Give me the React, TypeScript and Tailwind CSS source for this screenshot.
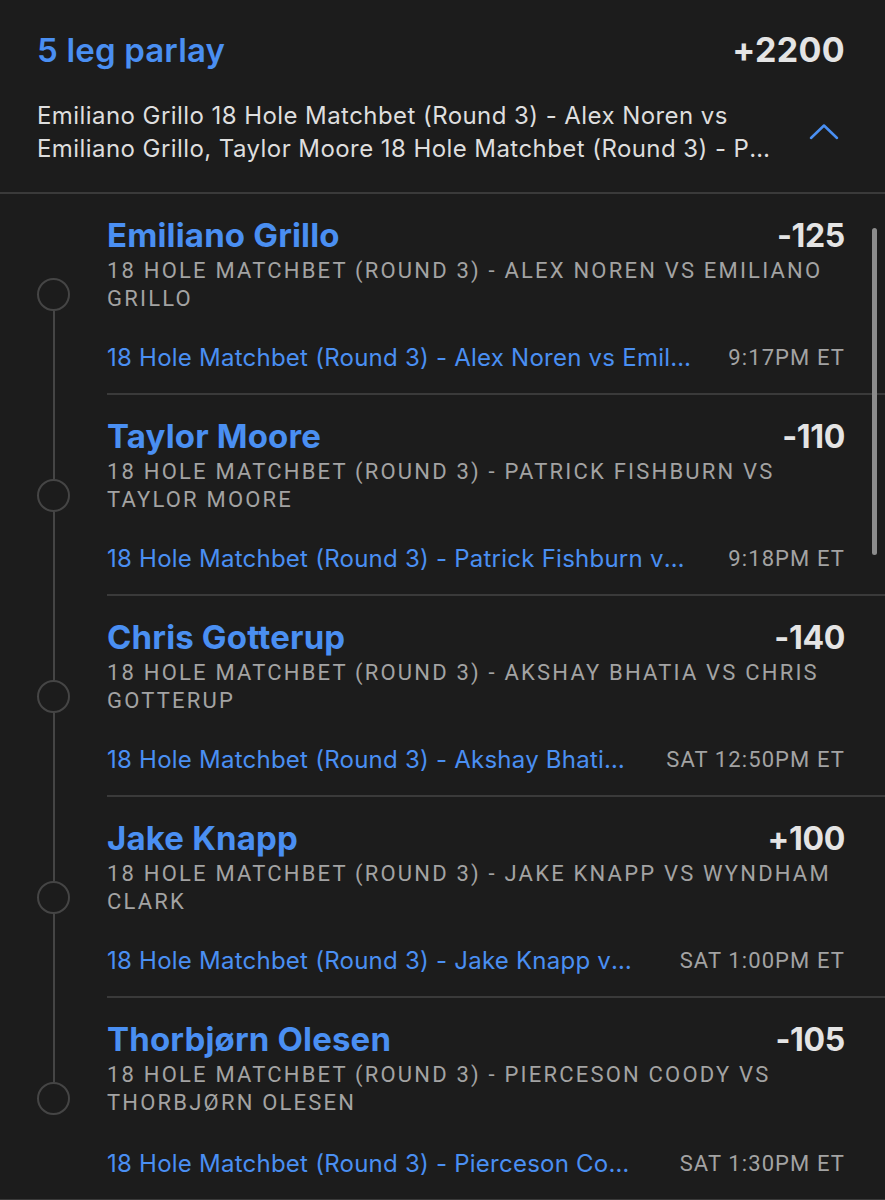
interface Leg {
  name: string;
  odds: string;
  market: string;
  event: string;
  time: string;
}

const legs: Leg[] = [
  {
    name: "Emiliano Grillo",
    odds: "-125",
    market: "18 Hole Matchbet (Round 3) - Alex Noren vs Emiliano Grillo",
    event: "18 Hole Matchbet (Round 3) - Alex Noren vs Emiliano Grillo",
    time: "9:17PM ET",
  },
  {
    name: "Taylor Moore",
    odds: "-110",
    market: "18 Hole Matchbet (Round 3) - Patrick Fishburn vs Taylor Moore",
    event: "18 Hole Matchbet (Round 3) - Patrick Fishburn vs Taylor Moore",
    time: "9:18PM ET",
  },
  {
    name: "Chris Gotterup",
    odds: "-140",
    market: "18 Hole Matchbet (Round 3) - Akshay Bhatia vs Chris Gotterup",
    event: "18 Hole Matchbet (Round 3) - Akshay Bhatia vs Chris Gotterup",
    time: "Sat 12:50PM ET",
  },
  {
    name: "Jake Knapp",
    odds: "+100",
    market: "18 Hole Matchbet (Round 3) - Jake Knapp vs Wyndham Clark",
    event: "18 Hole Matchbet (Round 3) - Jake Knapp vs Wyndham Clark",
    time: "Sat 1:00PM ET",
  },
  {
    name: "Thorbjørn Olesen",
    odds: "-105",
    market: "18 Hole Matchbet (Round 3) - Pierceson Coody vs Thorbjørn Olesen",
    event: "18 Hole Matchbet (Round 3) - Pierceson Coody vs Thorbjørn Olesen",
    time: "Sat 1:30PM ET",
  },
];

function LegRow({ leg, first, last }: { leg: Leg; first: boolean; last: boolean }) {
  return (
    <div className="flex h-[201px]">
      {/* timeline */}
      <div className="flex w-[107px] shrink-0 flex-col items-center">
        <div className={`w-[2px] flex-1 ${first ? "" : "bg-[#454545]"}`}></div>
        <div className="h-[33px] w-[33px] rounded-full border-2 border-[#454545]"></div>
        <div className={`w-[2px] flex-1 ${last ? "" : "bg-[#454545]"}`}></div>
      </div>
      <div className={`flex min-w-0 flex-1 flex-col pr-[40px] pt-[20px] ${last ? "" : "border-b-2 border-[#3a3a3a]"}`}>
        <div className="flex items-baseline justify-between">
          <div className="text-[33px] font-bold leading-[42px] tracking-[0.005em] text-[#4a8ff2]">{leg.name}</div>
          <div className="text-[32px] font-bold leading-[42px] tracking-[-0.01em] text-[#e4e4e4]">{leg.odds}</div>
        </div>
        <div className="font-['Roboto',sans-serif] text-[22px] uppercase leading-[28px] tracking-[0.1em] text-[#a3a3a3]">
          {leg.market}
        </div>
        <div className="mb-[19px] mt-auto flex items-center justify-between gap-9">
          <div className="min-w-0 flex-1 truncate text-[24px] leading-[32px] tracking-[0.01em] text-[#4a8ff2]">{leg.event}</div>
          <div className="shrink-0 font-['Roboto',sans-serif] text-[22px] uppercase leading-[32px] tracking-[0.05em] text-[#a3a3a3]">
            {leg.time}
          </div>
        </div>
      </div>
    </div>
  );
}

export default function App() {
  return (
    <div className="h-[1200px] overflow-hidden bg-[#1c1c1c] font-['Inter',sans-serif]">
      <div className="border-b-2 border-[#3a3a3a] pb-[27px] pl-[37px] pr-[40px] pt-[30px]">
        <div className="flex items-center justify-between">
          <div className="text-[33px] font-semibold leading-[40px] tracking-[0.005em] text-[#4a8ff2]">5 leg parlay</div>
          <div className="text-[34px] font-bold leading-[40px] tracking-[0.01em] text-[#e4e4e4]">+2200</div>
        </div>
        <div className="mt-[29px] flex items-center gap-[28px]">
          <div className="min-w-0 flex-1 text-[24px] leading-[33px] tracking-[0.018em] text-[#dedede]">
            <div className="truncate">Emiliano Grillo 18 Hole Matchbet (Round 3) - Alex Noren vs</div>
            <div className="truncate">
              Emiliano Grillo, Taylor Moore 18 Hole Matchbet (Round 3) - Patrick Fishburn vs Taylor Moore, Chris Gotterup 18 Hole Matchbet (Round 3)
            </div>
          </div>
          <svg width="30" height="18" viewBox="0 0 30 18" fill="none" className="mr-[6px] shrink-0">
            <path d="M2 15 L15 2.5 L28 15" stroke="#4a8ff2" strokeWidth="2.5" strokeLinecap="round" strokeLinejoin="round" />
          </svg>
        </div>
      </div>
      <div className="relative">
        {legs.map((leg, i) => (
          <LegRow key={i} leg={leg} first={i === 0} last={i === legs.length - 1} />
        ))}
        <div className="absolute right-[8px] top-[34px] h-[327px] w-[5px] rounded-full bg-[#8c8c8c]"></div>
      </div>
      <div className="h-[10px] border-t-2 border-[#3a3a3a] bg-[#2a2a2a]"></div>
    </div>
  );
}
